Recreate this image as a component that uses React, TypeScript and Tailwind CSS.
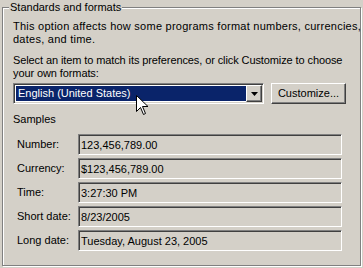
import React from "react";

const sunken =
  "border-t-[#808080] border-l-[#808080] border-b-white border-r-white border shadow-[inset_1px_1px_0_#404040,inset_-1px_-1px_0_#d4d0c8]";

function SampleRow({ label, value }: { label: string; value: string }) {
  return (
    <div className="flex items-center h-[21px]">
      <div className="w-[65px] pl-[4px]">{label}</div>
      <div className={`w-[264px] h-[21px] ${sunken} flex items-center pl-[2px] pt-[1px]`}>{value}</div>
    </div>
  );
}

export default function App() {
  return (
    <div
      className="w-[363px] h-[268px] bg-[#d4d0c8] relative text-[11px] leading-[13px] text-black overflow-hidden"
      style={{ fontFamily: '"Liberation Sans", Arial, sans-serif' }}
    >
      <div className="pt-[7px] pl-[2px]">
        <div className="relative w-[359px] h-[259px] border border-[#808080] shadow-[inset_1px_1px_0_#fff,1px_1px_0_#fff] pl-[10px] pt-[12px]">
          <span className="absolute left-[6px] top-[-8px] bg-[#d4d0c8] px-[1px] leading-[14px]">
            Standards and formats
          </span>
          <p className="tracking-[0.25px] whitespace-nowrap">
            This option affects how some programs format numbers, currencies,
            <br />
            dates, and time.
          </p>
          <p className="mt-[8px] tracking-[-0.1px] whitespace-nowrap">
            Select an item to match its preferences, or click Customize to choose
            <br />
            your own formats:
          </p>
          <div className="flex mt-[3px] h-[21px]">
            <div className={`w-[251px] h-[21px] ${sunken} bg-white flex p-[1px]`}>
              <div className="flex-1 flex">
                <div className="w-[230px] h-[15px] mt-[1px] ml-[1px] bg-[#0a246a] text-white pl-[2px] leading-[15px]">
                  English (United States)
                </div>
              </div>
              <div className="w-[16px] h-[17px] bg-[#d4d0c8] border border-t-white border-l-white border-b-[#404040] border-r-[#404040] shadow-[inset_-1px_-1px_0_#808080] flex items-center justify-center">
                <svg width="7" height="4" viewBox="0 0 7 4">
                  <path d="M0 0H7L3.5 4Z" fill="#000" />
                </svg>
              </div>
            </div>
            <div className="ml-[7px] w-[75px] h-[21px] border border-t-white border-l-white border-b-[#404040] border-r-[#404040] shadow-[inset_-1px_-1px_0_#808080] flex items-center justify-center">
              Customize...
            </div>
          </div>
          <div className="mt-[9px]">Samples</div>
          <div className="mt-[8px] flex flex-col gap-[3px]">
            <SampleRow label="Number:" value="123,456,789.00" />
            <SampleRow label="Currency:" value="$123,456,789.00" />
            <SampleRow label="Time:" value="3:27:30 PM" />
            <SampleRow label="Short date:" value="8/23/2005" />
            <SampleRow label="Long date:" value="Tuesday, August 23, 2005" />
          </div>
        </div>
      </div>
      <svg
        className="absolute left-[136px] top-[95px]"
        width="13"
        height="21"
        viewBox="0 0 13 21"
      >
        <path
          d="M0.5 0.5V16.5L4.5 12.5L7.5 19.5L9.5 18.5L6.5 11.5H12L0.5 0.5Z"
          fill="#fff"
          stroke="#000"
          strokeWidth="1"
        />
      </svg>
    </div>
  );
}
